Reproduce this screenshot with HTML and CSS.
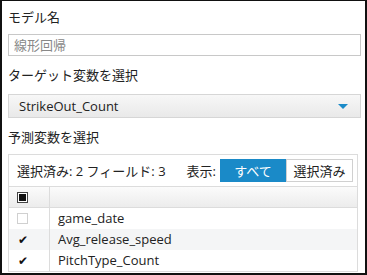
FILE: index.html
```html
<!DOCTYPE html>
<html lang="ja">
<head>
  <meta charset="UTF-8">
  <title>モデル設定</title>
  <link rel="stylesheet" href="styles.css">
</head>
<body>

<div class="panel">
  <div class="label">モデル名</div>
  <input class="text-input" type="text" placeholder="線形回帰">

  <div class="label">ターゲット変数を選択</div>
  <div class="dropdown">
    <span>StrikeOut_Count</span>
    <span class="arrow"></span>
  </div>

  <div class="label">予測変数を選択</div>
  <div class="field-box">
    <div class="toolbar">
      <span class="count">選択済み: 2 フィールド: 3</span>
      <span class="show">表示:</span>
      <button class="tab active">すべて</button>
      <button class="tab">選択済み</button>
    </div>
    <div class="row head">
      <div class="cell-check"><span class="box partial"></span></div>
      <div class="cell-name"></div>
    </div>
    <div class="row">
      <div class="cell-check"><span class="box"></span></div>
      <div class="cell-name">game_date</div>
    </div>
    <div class="row alt">
      <div class="cell-check"><span class="tick">✔</span></div>
      <div class="cell-name">Avg_release_speed</div>
    </div>
    <div class="row">
      <div class="cell-check"><span class="tick">✔</span></div>
      <div class="cell-name">PitchType_Count</div>
    </div>
  </div>
</div>

</body>
</html>
```

FILE: styles.css
```css
body {
    margin: 0;
    background: #fff;
}
.panel {
    width: 367px;
    height: 275px;
    box-sizing: border-box;
    border: 2px solid #111;
    border-top-width: 1px;
    padding: 5px 4px 0 6px;
    font-family: "Open Sans", "Noto Sans CJK JP", sans-serif;
    font-size: 13px;
    color: #222;
    overflow: hidden;
}
.label {
    height: 22px;
    line-height: 22px;
}
.text-input {
    display: block;
    width: 100%;
    height: 22px;
    box-sizing: border-box;
    margin: 6px 0 8px;
    border: 1px solid #c8c8c8;
    padding: 0 5px;
    font-family: inherit;
    font-size: 13px;
}
.text-input::placeholder {
    color: #888;
}
.dropdown {
    display: flex;
    align-items: center;
    justify-content: space-between;
    height: 24px;
    box-sizing: border-box;
    margin: 8px 0 8px;
    padding: 0 12px 0 10px;
    border: 1px solid #d6d6d6;
    background: linear-gradient(#f7f7f7, #e9e9e9);
}
.arrow {
    width: 0;
    height: 0;
    border-left: 5px solid transparent;
    border-right: 5px solid transparent;
    border-top: 5px solid #1a8ac8;
}
.field-box {
    margin: 6px 3px 0 0;
    border: 1px solid #dcdcdc;
}
.toolbar {
    display: flex;
    align-items: center;
    height: 31px;
    padding: 0 4px 0 8px;
}
.count {
    flex: 1;
}
.show {
    margin-right: 4px;
}
.tab {
    height: 23px;
    width: 67px;
    border: 1px solid #d0d0d0;
    background: #fff;
    font-family: inherit;
    font-size: 13px;
    color: #222;
    padding: 0;
}
.tab.active {
    width: 66px;
    background: #1a8ac8;
    border-color: #1a8ac8;
    color: #fff;
}
.row {
    display: flex;
    height: 21px;
    line-height: 21px;
}
.row.head {
    height: 20px;
    background: linear-gradient(#fbfbfb, #ececec);
    border-top: 1px solid #dcdcdc;
    border-bottom: 1px solid #dcdcdc;
}
.row.alt {
    background: #f4f5f6;
}
.cell-check {
    width: 41px;
    border-right: 1px solid #dcdcdc;
    display: flex;
    align-items: center;
    padding-left: 8px;
    box-sizing: border-box;
}
.cell-name {
    padding-left: 8px;
}
.box {
    width: 11px;
    height: 11px;
    box-sizing: border-box;
    border: 1px solid #d0d0d0;
    background: #fff;
}
.box.partial {
    border: 1px solid #444;
    background: #111;
    box-shadow: inset 0 0 0 1px #fff;
}
.tick {
    font-size: 12px;
    color: #111;
    width: 11px;
    text-align: center;
}
```
